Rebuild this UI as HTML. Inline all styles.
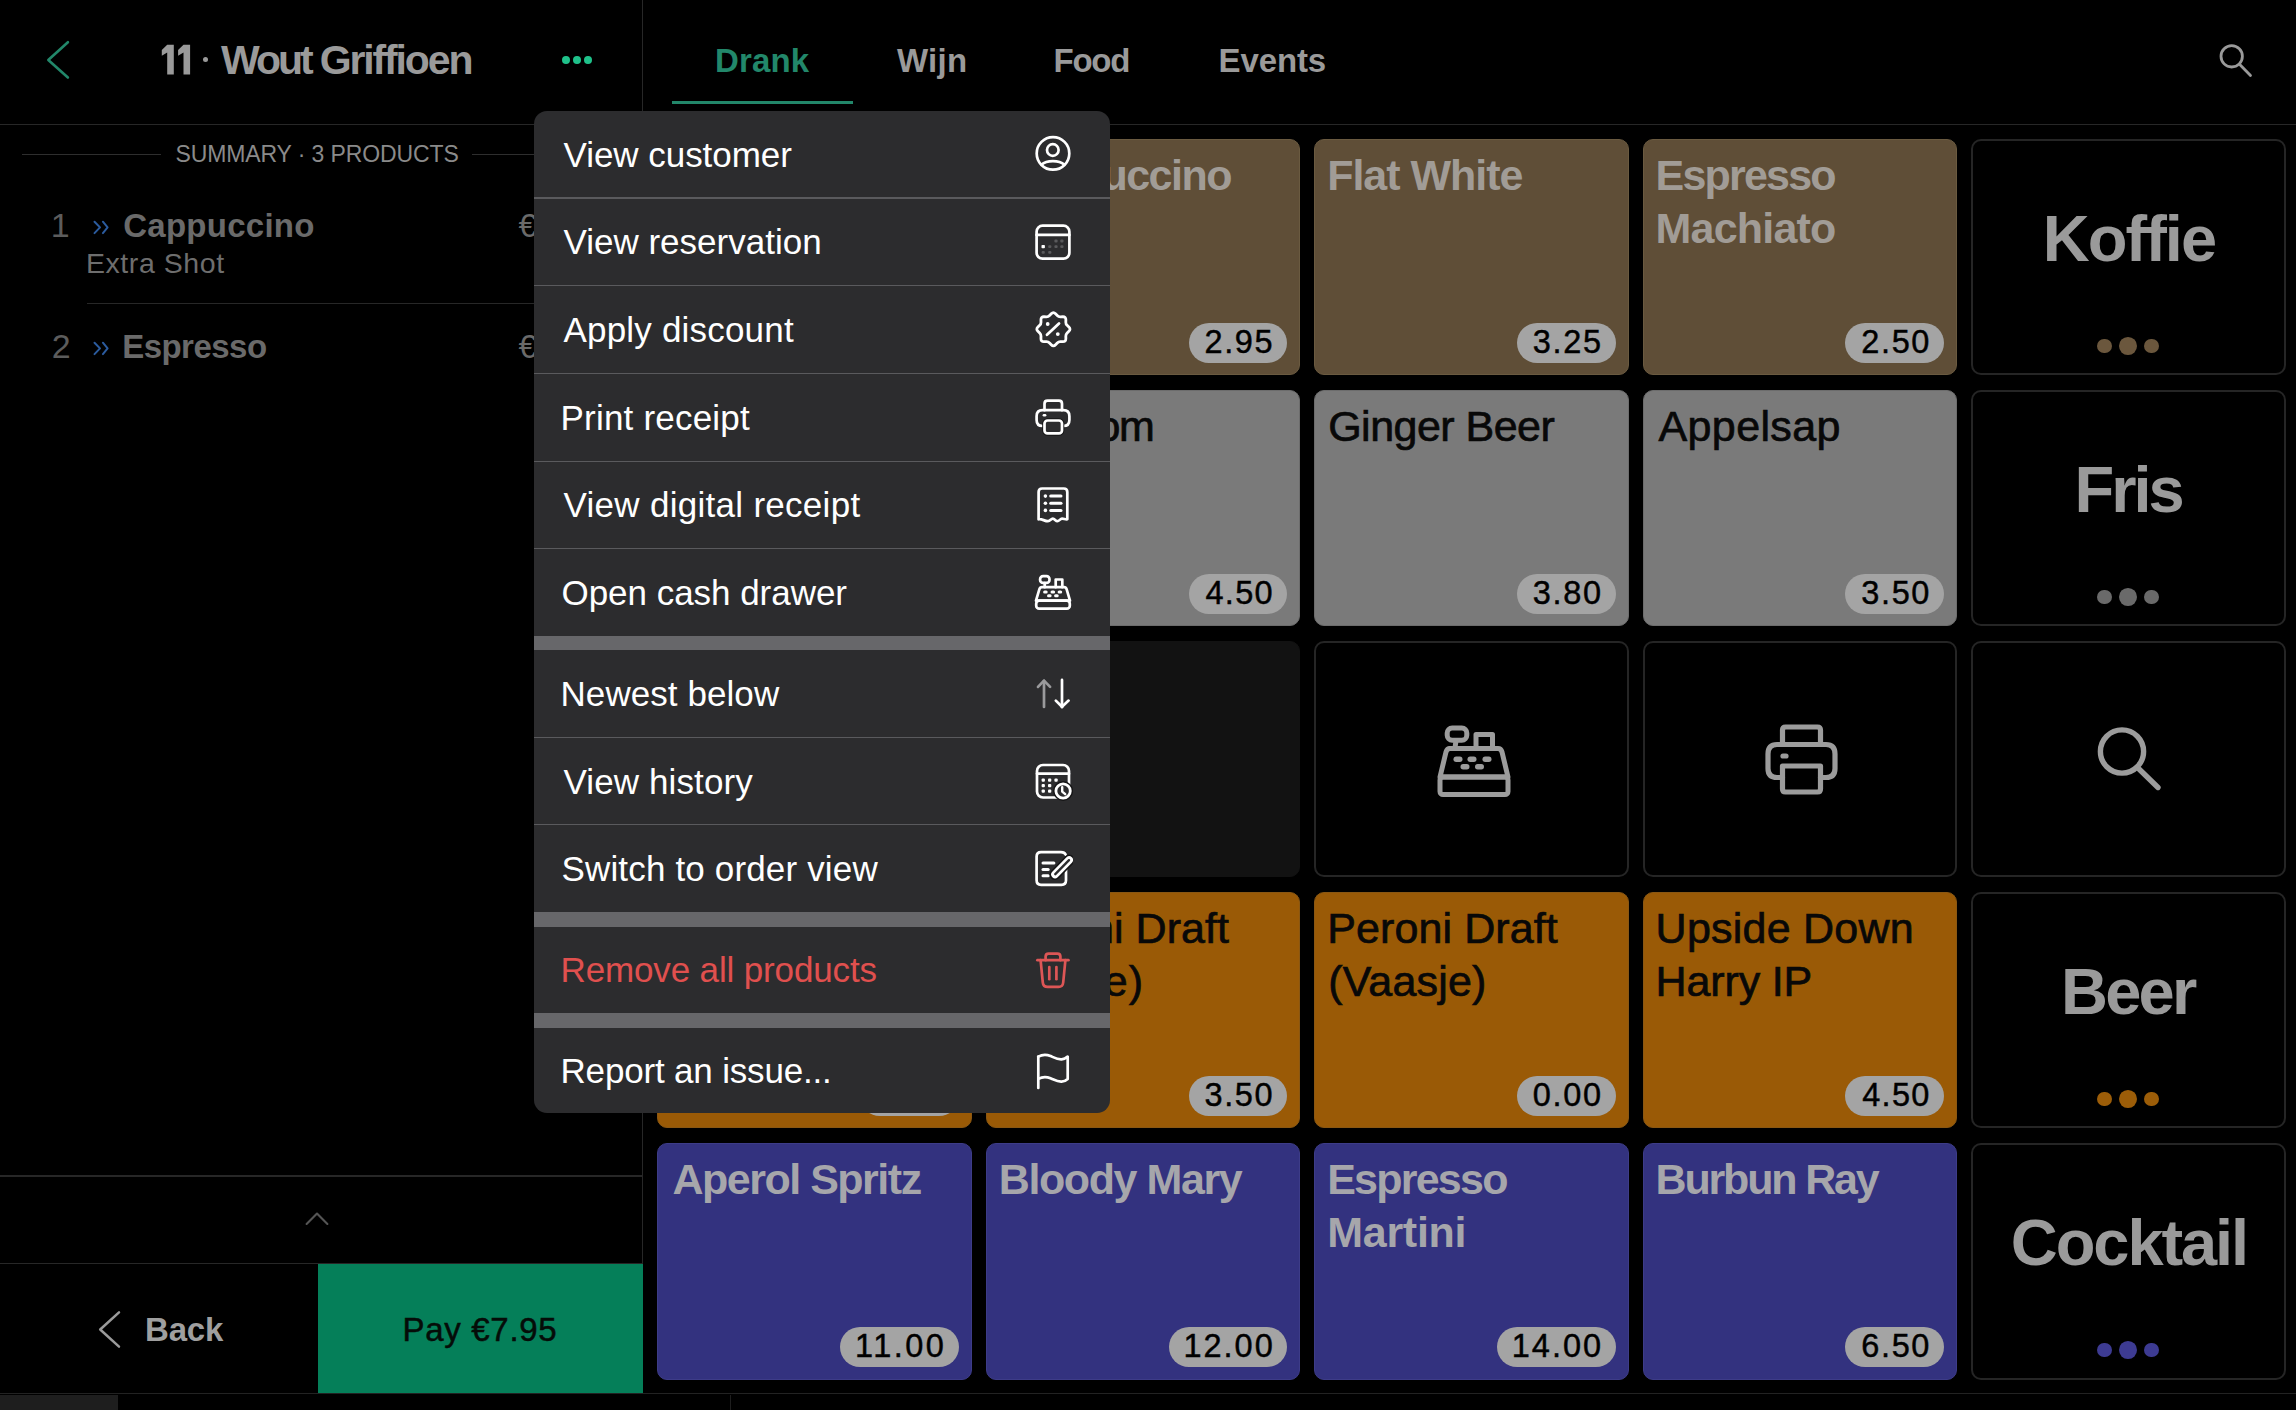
<!DOCTYPE html><html><head><meta charset="utf-8"><title>POS</title><style>
html,body{margin:0;padding:0;background:#000;width:2296px;height:1410px;overflow:hidden;position:relative;}
.t{position:absolute;font-family:"Liberation Sans", sans-serif;white-space:nowrap;line-height:1;}
.r{position:absolute;}
</style></head><body>
<svg class="r" style="left:40.00px;top:35.00px" width="40" height="50" viewBox="0 0 40 50" fill="none"><polyline points="27.9,7.2 8.3,25 27.9,42.5" stroke="#22876a" stroke-width="2.6" stroke-linecap="round" stroke-linejoin="round"/></svg>
<svg class="r" style="left:150.00px;top:40.00px" width="50" height="40" viewBox="0 0 50 40" fill="none"><g fill="#9a9a9a"><path d="M17.2 4.8 H23.8 V34.4 H17.2 V12.6 L11.8 15.8 V10 Z"/><path d="M33.5 4.8 H40.1 V34.4 H33.5 V12.6 L28.1 15.8 V10 Z"/></g></svg>
<div class="r" style="left:202.90px;top:57.20px;width:5.20px;height:5.20px;border-radius:50%;background:#9a9a9a"></div>
<div class="t" style="left:221.00px;top:39.69px;font-size:41px;color:#9a9a9a;font-weight:700;letter-spacing:-3.033px;">Wout</div>
<div class="t" style="left:319.80px;top:39.69px;font-size:41px;color:#9a9a9a;font-weight:700;letter-spacing:-2.150px;">Griffioen</div>
<div class="r" style="left:562.20px;top:56.10px;width:7.80px;height:7.80px;border-radius:50%;background:#1fc18a"></div>
<div class="r" style="left:573.00px;top:56.10px;width:7.80px;height:7.80px;border-radius:50%;background:#1fc18a"></div>
<div class="r" style="left:584.00px;top:56.10px;width:7.80px;height:7.80px;border-radius:50%;background:#1fc18a"></div>
<div class="t" style="left:715.00px;top:44.27px;font-size:33px;color:#22876a;font-weight:700;letter-spacing:0.150px;">Drank</div>
<div class="t" style="left:897.00px;top:44.27px;font-size:33px;color:#9a9a9a;font-weight:700;letter-spacing:0.267px;">Wijn</div>
<div class="t" style="left:1053.50px;top:44.27px;font-size:33px;color:#9a9a9a;font-weight:700;letter-spacing:-1.233px;">Food</div>
<div class="t" style="left:1218.60px;top:44.27px;font-size:33px;color:#9a9a9a;font-weight:700;letter-spacing:-0.120px;">Events</div>
<div class="r" style="left:672.00px;top:101.00px;width:181.00px;height:3.00px;background:#22876a;"></div>
<svg class="r" style="left:2210.00px;top:35.00px" width="50" height="50" viewBox="0 0 50 50" fill="none"><circle cx="21.7" cy="21.3" r="10.7" stroke="#9a9a9a" stroke-width="2.8"/><line x1="29.5" y1="29.2" x2="40.5" y2="40.5" stroke="#9a9a9a" stroke-width="2.8" stroke-linecap="round"/></svg>
<div class="r" style="left:0.00px;top:123.50px;width:2296.00px;height:1.50px;background:#272727;"></div>
<div class="r" style="left:641.80px;top:0.00px;width:1.50px;height:1393.50px;background:#272727;"></div>
<div class="r" style="left:22.00px;top:154.00px;width:139.00px;height:1.30px;background:#2e2e2e;"></div>
<div class="r" style="left:472.00px;top:154.00px;width:170.00px;height:1.30px;background:#2e2e2e;"></div>
<div class="t" style="left:175.40px;top:142.93px;font-size:23px;color:#8a8a8a;font-weight:400;letter-spacing:-0.100px;">SUMMARY · 3 PRODUCTS</div>
<div class="t" style="left:50.70px;top:207.72px;font-size:34px;color:#5c5c5c;font-weight:400;letter-spacing:0.000px;">1</div>
<svg class="r" style="left:90.00px;top:216.50px" width="22" height="18" viewBox="0 0 22 18" fill="none"><g stroke="#2b5b9e" stroke-width="2" stroke-linecap="round" stroke-linejoin="round" fill="none"><polyline points="4.5,4.7 10,10.4 4.5,16.1"/><polyline points="12.9,4.7 17.6,10.4 12.9,16.1"/></g></svg>
<div class="t" style="left:123.20px;top:208.57px;font-size:33px;color:#6a6a6a;font-weight:700;letter-spacing:0.267px;">Cappuccino</div>
<div class="t" style="left:518.60px;top:208.57px;font-size:33px;color:#6a6a6a;font-weight:400;letter-spacing:0.000px;">€</div>
<div class="t" style="left:86.00px;top:248.87px;font-size:28.5px;color:#6e6e6e;font-weight:400;letter-spacing:0.556px;">Extra Shot</div>
<div class="r" style="left:87.00px;top:302.50px;width:555.00px;height:1.50px;background:#272727;"></div>
<div class="t" style="left:51.70px;top:328.82px;font-size:34px;color:#5c5c5c;font-weight:400;letter-spacing:0.000px;">2</div>
<svg class="r" style="left:90.00px;top:337.60px" width="22" height="18" viewBox="0 0 22 18" fill="none"><g stroke="#2b5b9e" stroke-width="2" stroke-linecap="round" stroke-linejoin="round" fill="none"><polyline points="4.5,4.7 10,10.4 4.5,16.1"/><polyline points="12.9,4.7 17.6,10.4 12.9,16.1"/></g></svg>
<div class="t" style="left:122.20px;top:329.67px;font-size:33px;color:#6a6a6a;font-weight:700;letter-spacing:-0.529px;">Espresso</div>
<div class="t" style="left:518.60px;top:329.67px;font-size:33px;color:#6a6a6a;font-weight:400;letter-spacing:0.000px;">€</div>
<div class="r" style="left:0.00px;top:1175.30px;width:642.00px;height:1.50px;background:#272727;"></div>
<svg class="r" style="left:300.00px;top:1205.00px" width="35" height="25" viewBox="0 0 35 25" fill="none"><polyline points="6.6,19 17,8.6 27.4,19" stroke="#555" stroke-width="2.1" stroke-linecap="round" stroke-linejoin="round"/></svg>
<div class="r" style="left:0.00px;top:1262.80px;width:642.00px;height:1.50px;background:#272727;"></div>
<svg class="r" style="left:90.00px;top:1300.00px" width="40" height="60" viewBox="0 0 40 60" fill="none"><polyline points="29,12.3 10.2,29.5 29,46.6" stroke="#9a9a9a" stroke-width="2.5" stroke-linecap="round" stroke-linejoin="round"/></svg>
<div class="t" style="left:145.00px;top:1313.07px;font-size:33px;color:#9f9f9f;font-weight:700;letter-spacing:-0.167px;">Back</div>
<div class="r" style="left:317.50px;top:1264.30px;width:325.00px;height:129.20px;background:#057f59;"></div>
<div class="t" style="left:402.60px;top:1313.07px;font-size:33px;color:#050c08;font-weight:400;letter-spacing:0.675px;-webkit-text-stroke:0.5px #050c08;">Pay €7.95</div>
<div class="r" style="left:0.00px;top:1393.20px;width:2296.00px;height:1.20px;background:#222222;"></div>
<div class="r" style="left:0.00px;top:1395.00px;width:118.00px;height:15.00px;background:#1e1e1e;"></div>
<div class="r" style="left:729.50px;top:1394.50px;width:1.50px;height:15.50px;background:#1e1e1e;"></div>
<div class="r" style="left:657.40px;top:139.00px;width:314.50px;height:236.35px;background:#5f4e37;border-radius:10px;box-sizing:border-box;border:1.6px solid #6a5a40"></div>
<div class="t" style="left:670.40px;top:154.00px;font-size:43px;color:#a19c96;font-weight:700;letter-spacing:0.000px;">Espresso</div>
<div class="r" style="left:860.20px;top:322.75px;width:98.80px;height:40px;border-radius:20px;background:#a4a4a4"></div>
<div class="t" style="left:876.00px;top:326.14px;font-size:32.5px;color:#000;font-weight:400;letter-spacing:1.667px;-webkit-text-stroke:0.45px #000;">2.50</div>
<div class="r" style="left:985.80px;top:139.00px;width:314.50px;height:236.35px;background:#5f4e37;border-radius:10px;box-sizing:border-box;border:1.6px solid #6a5a40"></div>
<div class="t" style="left:999.80px;top:154.00px;font-size:43px;color:#a19c96;font-weight:700;letter-spacing:-1.478px;">Cappuccino</div>
<div class="r" style="left:1188.60px;top:322.75px;width:98.80px;height:40px;border-radius:20px;background:#a4a4a4"></div>
<div class="t" style="left:1204.40px;top:326.14px;font-size:32.5px;color:#000;font-weight:400;letter-spacing:1.667px;-webkit-text-stroke:0.45px #000;">2.95</div>
<div class="r" style="left:1314.20px;top:139.00px;width:314.50px;height:236.35px;background:#5f4e37;border-radius:10px;box-sizing:border-box;border:1.6px solid #6a5a40"></div>
<div class="t" style="left:1327.20px;top:154.00px;font-size:43px;color:#a19c96;font-weight:700;letter-spacing:-1.022px;">Flat White</div>
<div class="r" style="left:1517.00px;top:322.75px;width:98.80px;height:40px;border-radius:20px;background:#a4a4a4"></div>
<div class="t" style="left:1532.80px;top:326.14px;font-size:32.5px;color:#000;font-weight:400;letter-spacing:1.667px;-webkit-text-stroke:0.45px #000;">3.25</div>
<div class="r" style="left:1642.60px;top:139.00px;width:314.50px;height:236.35px;background:#5f4e37;border-radius:10px;box-sizing:border-box;border:1.6px solid #6a5a40"></div>
<div class="t" style="left:1655.60px;top:154.00px;font-size:43px;color:#a19c96;font-weight:700;letter-spacing:-1.800px;">Espresso</div>
<div class="t" style="left:1655.60px;top:207.00px;font-size:43px;color:#a19c96;font-weight:700;letter-spacing:-0.800px;">Machiato</div>
<div class="r" style="left:1845.40px;top:322.75px;width:98.80px;height:40px;border-radius:20px;background:#a4a4a4"></div>
<div class="t" style="left:1861.20px;top:326.14px;font-size:32.5px;color:#000;font-weight:400;letter-spacing:1.667px;-webkit-text-stroke:0.45px #000;">2.50</div>
<div class="r" style="left:1971.00px;top:139.00px;width:314.50px;height:236.35px;background:#000;border-radius:10px;box-sizing:border-box;border:2.6px solid #252525"></div>
<div class="t" style="left:2042.70px;top:205.68px;font-size:65px;color:#9a9a9a;font-weight:700;letter-spacing:-1.940px;">Koffie</div>
<div class="r" style="left:2097.35px;top:338.80px;width:14.40px;height:14.40px;border-radius:50%;background:#6b573d"></div>
<div class="r" style="left:2119.05px;top:337.10px;width:17.80px;height:17.80px;border-radius:50%;background:#6b573d"></div>
<div class="r" style="left:2144.25px;top:338.80px;width:14.40px;height:14.40px;border-radius:50%;background:#6b573d"></div>
<div class="r" style="left:657.40px;top:390.05px;width:314.50px;height:236.35px;background:#7a7a7a;border-radius:10px;box-sizing:border-box;border:1.6px solid #6c6c6c"></div>
<div class="t" style="left:671.40px;top:405.05px;font-size:43px;color:#080808;font-weight:400;letter-spacing:0.000px;-webkit-text-stroke:0.7px #080808;">Cola</div>
<div class="r" style="left:860.20px;top:573.80px;width:98.80px;height:40px;border-radius:20px;background:#a4a4a4"></div>
<div class="t" style="left:876.00px;top:577.19px;font-size:32.5px;color:#000;font-weight:400;letter-spacing:1.667px;-webkit-text-stroke:0.45px #000;">3.50</div>
<div class="r" style="left:985.80px;top:390.05px;width:314.50px;height:236.35px;background:#7a7a7a;border-radius:10px;box-sizing:border-box;border:1.6px solid #6c6c6c"></div>
<div class="t" style="left:998.80px;top:405.05px;font-size:43px;color:#080808;font-weight:400;letter-spacing:-1.467px;-webkit-text-stroke:0.7px #080808;">Blossom</div>
<div class="r" style="left:1188.60px;top:573.80px;width:98.80px;height:40px;border-radius:20px;background:#a4a4a4"></div>
<div class="t" style="left:1205.40px;top:577.19px;font-size:32.5px;color:#000;font-weight:400;letter-spacing:1.333px;-webkit-text-stroke:0.45px #000;">4.50</div>
<div class="r" style="left:1314.20px;top:390.05px;width:314.50px;height:236.35px;background:#7a7a7a;border-radius:10px;box-sizing:border-box;border:1.6px solid #6c6c6c"></div>
<div class="t" style="left:1328.20px;top:405.05px;font-size:43px;color:#080808;font-weight:400;letter-spacing:-0.520px;-webkit-text-stroke:0.7px #080808;">Ginger Beer</div>
<div class="r" style="left:1517.00px;top:573.80px;width:98.80px;height:40px;border-radius:20px;background:#a4a4a4"></div>
<div class="t" style="left:1532.80px;top:577.19px;font-size:32.5px;color:#000;font-weight:400;letter-spacing:1.667px;-webkit-text-stroke:0.45px #000;">3.80</div>
<div class="r" style="left:1642.60px;top:390.05px;width:314.50px;height:236.35px;background:#7a7a7a;border-radius:10px;box-sizing:border-box;border:1.6px solid #6c6c6c"></div>
<div class="t" style="left:1658.60px;top:405.05px;font-size:43px;color:#080808;font-weight:400;letter-spacing:0.343px;-webkit-text-stroke:0.7px #080808;">Appelsap</div>
<div class="r" style="left:1845.40px;top:573.80px;width:98.80px;height:40px;border-radius:20px;background:#a4a4a4"></div>
<div class="t" style="left:1861.20px;top:577.19px;font-size:32.5px;color:#000;font-weight:400;letter-spacing:1.667px;-webkit-text-stroke:0.45px #000;">3.50</div>
<div class="r" style="left:1971.00px;top:390.05px;width:314.50px;height:236.35px;background:#000;border-radius:10px;box-sizing:border-box;border:2.6px solid #252525"></div>
<div class="t" style="left:2074.40px;top:456.73px;font-size:65px;color:#9a9a9a;font-weight:700;letter-spacing:-2.967px;">Fris</div>
<div class="r" style="left:2097.35px;top:589.85px;width:14.40px;height:14.40px;border-radius:50%;background:#6a6a6a"></div>
<div class="r" style="left:2119.05px;top:588.15px;width:17.80px;height:17.80px;border-radius:50%;background:#6a6a6a"></div>
<div class="r" style="left:2144.25px;top:589.85px;width:14.40px;height:14.40px;border-radius:50%;background:#6a6a6a"></div>
<div class="r" style="left:657.40px;top:641.10px;width:314.50px;height:236.35px;background:#121212;border-radius:10px;box-sizing:border-box;border:1.6px solid #121212"></div>
<div class="r" style="left:985.80px;top:641.10px;width:314.50px;height:236.35px;background:#121212;border-radius:10px;box-sizing:border-box;border:1.6px solid #121212"></div>
<div class="r" style="left:1314.20px;top:641.10px;width:314.50px;height:236.35px;background:#000;border-radius:10px;box-sizing:border-box;border:2.6px solid #252525"></div>
<div class="r" style="left:1642.60px;top:641.10px;width:314.50px;height:236.35px;background:#000;border-radius:10px;box-sizing:border-box;border:2.6px solid #252525"></div>
<div class="r" style="left:1971.00px;top:641.10px;width:314.50px;height:236.35px;background:#000;border-radius:10px;box-sizing:border-box;border:2.6px solid #252525"></div>
<div class="r" style="left:657.40px;top:892.15px;width:314.50px;height:236.35px;background:#9a5a06;border-radius:10px;box-sizing:border-box;border:1.6px solid #8a5712"></div>
<div class="t" style="left:670.40px;top:907.15px;font-size:43px;color:#080808;font-weight:400;letter-spacing:0.000px;-webkit-text-stroke:0.7px #080808;">Heineken</div>
<div class="r" style="left:860.20px;top:1075.90px;width:98.80px;height:40px;border-radius:20px;background:#a4a4a4"></div>
<div class="t" style="left:876.00px;top:1079.29px;font-size:32.5px;color:#000;font-weight:400;letter-spacing:1.667px;-webkit-text-stroke:0.45px #000;">3.50</div>
<div class="r" style="left:985.80px;top:892.15px;width:314.50px;height:236.35px;background:#9a5a06;border-radius:10px;box-sizing:border-box;border:1.6px solid #8a5712"></div>
<div class="t" style="left:998.80px;top:907.15px;font-size:43px;color:#080808;font-weight:400;letter-spacing:0.073px;-webkit-text-stroke:0.7px #080808;">Peroni Draft</div>
<div class="t" style="left:999.80px;top:960.15px;font-size:43px;color:#080808;font-weight:400;letter-spacing:1.000px;-webkit-text-stroke:0.7px #080808;">(Pintje)</div>
<div class="r" style="left:1188.60px;top:1075.90px;width:98.80px;height:40px;border-radius:20px;background:#a4a4a4"></div>
<div class="t" style="left:1204.40px;top:1079.29px;font-size:32.5px;color:#000;font-weight:400;letter-spacing:1.667px;-webkit-text-stroke:0.45px #000;">3.50</div>
<div class="r" style="left:1314.20px;top:892.15px;width:314.50px;height:236.35px;background:#9a5a06;border-radius:10px;box-sizing:border-box;border:1.6px solid #8a5712"></div>
<div class="t" style="left:1327.20px;top:907.15px;font-size:43px;color:#080808;font-weight:400;letter-spacing:0.100px;-webkit-text-stroke:0.7px #080808;">Peroni Draft</div>
<div class="t" style="left:1328.20px;top:960.15px;font-size:43px;color:#080808;font-weight:400;letter-spacing:0.186px;-webkit-text-stroke:0.7px #080808;">(Vaasje)</div>
<div class="r" style="left:1517.00px;top:1075.90px;width:98.80px;height:40px;border-radius:20px;background:#a4a4a4"></div>
<div class="t" style="left:1532.80px;top:1079.29px;font-size:32.5px;color:#000;font-weight:400;letter-spacing:1.667px;-webkit-text-stroke:0.45px #000;">0.00</div>
<div class="r" style="left:1642.60px;top:892.15px;width:314.50px;height:236.35px;background:#9a5a06;border-radius:10px;box-sizing:border-box;border:1.6px solid #8a5712"></div>
<div class="t" style="left:1655.60px;top:907.15px;font-size:43px;color:#080808;font-weight:400;letter-spacing:0.240px;-webkit-text-stroke:0.7px #080808;">Upside Down</div>
<div class="t" style="left:1655.60px;top:960.15px;font-size:43px;color:#080808;font-weight:400;letter-spacing:-0.143px;-webkit-text-stroke:0.7px #080808;">Harry IP</div>
<div class="r" style="left:1845.40px;top:1075.90px;width:98.80px;height:40px;border-radius:20px;background:#a4a4a4"></div>
<div class="t" style="left:1862.20px;top:1079.29px;font-size:32.5px;color:#000;font-weight:400;letter-spacing:1.333px;-webkit-text-stroke:0.45px #000;">4.50</div>
<div class="r" style="left:1971.00px;top:892.15px;width:314.50px;height:236.35px;background:#000;border-radius:10px;box-sizing:border-box;border:2.6px solid #252525"></div>
<div class="t" style="left:2061.00px;top:958.83px;font-size:65px;color:#9a9a9a;font-weight:700;letter-spacing:-2.767px;">Beer</div>
<div class="r" style="left:2097.35px;top:1091.95px;width:14.40px;height:14.40px;border-radius:50%;background:#9c5d08"></div>
<div class="r" style="left:2119.05px;top:1090.25px;width:17.80px;height:17.80px;border-radius:50%;background:#9c5d08"></div>
<div class="r" style="left:2144.25px;top:1091.95px;width:14.40px;height:14.40px;border-radius:50%;background:#9c5d08"></div>
<div class="r" style="left:657.40px;top:1143.20px;width:314.50px;height:236.35px;background:#33327f;border-radius:10px;box-sizing:border-box;border:1.6px solid #3d3c88"></div>
<div class="t" style="left:672.40px;top:1158.20px;font-size:43px;color:#a6a6ab;font-weight:700;letter-spacing:-1.483px;">Aperol Spritz</div>
<div class="r" style="left:840.20px;top:1326.95px;width:118.80px;height:40px;border-radius:20px;background:#a4a4a4"></div>
<div class="t" style="left:855.00px;top:1330.34px;font-size:32.5px;color:#000;font-weight:400;letter-spacing:2.500px;-webkit-text-stroke:0.45px #000;">11.00</div>
<div class="r" style="left:985.80px;top:1143.20px;width:314.50px;height:236.35px;background:#33327f;border-radius:10px;box-sizing:border-box;border:1.6px solid #3d3c88"></div>
<div class="t" style="left:998.80px;top:1158.20px;font-size:43px;color:#a6a6ab;font-weight:700;letter-spacing:-1.420px;">Bloody Mary</div>
<div class="r" style="left:1168.60px;top:1326.95px;width:118.80px;height:40px;border-radius:20px;background:#a4a4a4"></div>
<div class="t" style="left:1183.40px;top:1330.34px;font-size:32.5px;color:#000;font-weight:400;letter-spacing:2.000px;-webkit-text-stroke:0.45px #000;">12.00</div>
<div class="r" style="left:1314.20px;top:1143.20px;width:314.50px;height:236.35px;background:#33327f;border-radius:10px;box-sizing:border-box;border:1.6px solid #3d3c88"></div>
<div class="t" style="left:1327.20px;top:1158.20px;font-size:43px;color:#a6a6ab;font-weight:700;letter-spacing:-1.771px;">Espresso</div>
<div class="t" style="left:1327.20px;top:1211.20px;font-size:43px;color:#a6a6ab;font-weight:700;letter-spacing:-0.267px;">Martini</div>
<div class="r" style="left:1497.00px;top:1326.95px;width:118.80px;height:40px;border-radius:20px;background:#a4a4a4"></div>
<div class="t" style="left:1511.80px;top:1330.34px;font-size:32.5px;color:#000;font-weight:400;letter-spacing:2.000px;-webkit-text-stroke:0.45px #000;">14.00</div>
<div class="r" style="left:1642.60px;top:1143.20px;width:314.50px;height:236.35px;background:#33327f;border-radius:10px;box-sizing:border-box;border:1.6px solid #3d3c88"></div>
<div class="t" style="left:1655.60px;top:1158.20px;font-size:43px;color:#a6a6ab;font-weight:700;letter-spacing:-2.178px;">Burbun Ray</div>
<div class="r" style="left:1845.40px;top:1326.95px;width:98.80px;height:40px;border-radius:20px;background:#a4a4a4"></div>
<div class="t" style="left:1861.20px;top:1330.34px;font-size:32.5px;color:#000;font-weight:400;letter-spacing:1.667px;-webkit-text-stroke:0.45px #000;">6.50</div>
<div class="r" style="left:1971.00px;top:1143.20px;width:314.50px;height:236.35px;background:#000;border-radius:10px;box-sizing:border-box;border:2.6px solid #252525"></div>
<div class="t" style="left:2010.80px;top:1209.88px;font-size:65px;color:#9a9a9a;font-weight:700;letter-spacing:-2.071px;">Cocktail</div>
<div class="r" style="left:2097.35px;top:1343.00px;width:14.40px;height:14.40px;border-radius:50%;background:#3d3b92"></div>
<div class="r" style="left:2119.05px;top:1341.30px;width:17.80px;height:17.80px;border-radius:50%;background:#3d3b92"></div>
<div class="r" style="left:2144.25px;top:1343.00px;width:14.40px;height:14.40px;border-radius:50%;background:#3d3b92"></div>
<svg class="r" style="left:1420.00px;top:700.00px" width="110" height="120" viewBox="0 0 110 120" fill="none"><g stroke="#9c9c9c" stroke-width="5" stroke-linejoin="round" stroke-linecap="round">
<rect x="27.2" y="28" width="19.6" height="12.2" rx="5"/>
<line x1="36" y1="40.5" x2="35" y2="48"/>
<rect x="56" y="34.5" width="16.5" height="14"/>
<path d="M29 48.5 H78 Q81 48.5 82 52 L88 77 H20 L26 52 Q27 48.5 30 48.5 Z"/>
<rect x="20" y="77" width="68" height="17.5" rx="3"/>
</g>
<g fill="#9c9c9c"><rect x="33.5" y="56.5" width="9" height="5.5" rx="2.7"/><rect x="47.5" y="56.5" width="9" height="5.5" rx="2.7"/><rect x="62.5" y="56.5" width="9" height="5.5" rx="2.7"/><rect x="40.5" y="64" width="9" height="5.5" rx="2.7"/><rect x="55" y="64" width="9" height="5.5" rx="2.7"/></g></svg>
<svg class="r" style="left:1745.00px;top:700.00px" width="110" height="120" viewBox="0 0 110 120" fill="none"><g stroke="#9c9c9c" stroke-width="5.2" stroke-linejoin="round" stroke-linecap="round">
<path d="M37.5 44 V30 Q37.5 27 40.5 27 H72.5 Q75.5 27 75.5 30 V44"/>
<path d="M37.5 77.5 H32 Q23 77.5 23 68.5 V54 Q23 44.5 32 44.5 H81 Q90 44.5 90 54 V68.5 Q90 77.5 81 77.5 H75.5"/>
<path d="M37.5 66 H75.5 V89 Q75.5 92 72.5 92 H40.5 Q37.5 92 37.5 89 Z"/>
<line x1="38" y1="56" x2="41" y2="56"/>
</g></svg>
<svg class="r" style="left:2075.00px;top:700.00px" width="110" height="120" viewBox="0 0 110 120" fill="none"><circle cx="47" cy="51.5" r="21.6" stroke="#9c9c9c" stroke-width="5.4"/><line x1="64" y1="69" x2="83" y2="87.5" stroke="#9c9c9c" stroke-width="5.4" stroke-linecap="round"/></svg>
<div class="r" style="left:533.8px;top:110.8px;width:576.40px;height:1002.10px;background:#2c2c2e;border-radius:13px;overflow:hidden">
<div class="r" style="left:0;top:86.60px;width:100%;height:1.20px;background:#5a5a5d"></div>
<div class="r" style="left:0;top:174.00px;width:100%;height:1.20px;background:#5a5a5d"></div>
<div class="r" style="left:0;top:261.80px;width:100%;height:1.20px;background:#5a5a5d"></div>
<div class="r" style="left:0;top:349.80px;width:100%;height:1.20px;background:#5a5a5d"></div>
<div class="r" style="left:0;top:437.20px;width:100%;height:1.20px;background:#5a5a5d"></div>
<div class="r" style="left:0;top:626.20px;width:100%;height:1.20px;background:#5a5a5d"></div>
<div class="r" style="left:0;top:713.50px;width:100%;height:1.20px;background:#5a5a5d"></div>
<div class="r" style="left:0;top:525.40px;width:100%;height:13.60px;background:#67676a"></div>
<div class="r" style="left:0;top:801.10px;width:100%;height:14.70px;background:#67676a"></div>
<div class="r" style="left:0;top:902.30px;width:100%;height:14.60px;background:#67676a"></div>
</div>
<div class="t" style="left:563.50px;top:136.97px;font-size:35px;color:#fff;font-weight:400;letter-spacing:-0.042px;">View customer</div>
<div class="t" style="left:563.50px;top:224.17px;font-size:35px;color:#fff;font-weight:400;letter-spacing:0.000px;">View reservation</div>
<div class="t" style="left:563.50px;top:311.77px;font-size:35px;color:#fff;font-weight:400;letter-spacing:0.192px;">Apply discount</div>
<div class="t" style="left:560.50px;top:399.67px;font-size:35px;color:#fff;font-weight:400;letter-spacing:0.208px;">Print receipt</div>
<div class="t" style="left:563.50px;top:487.37px;font-size:35px;color:#fff;font-weight:400;letter-spacing:0.289px;">View digital receipt</div>
<div class="t" style="left:561.50px;top:574.97px;font-size:35px;color:#fff;font-weight:400;letter-spacing:-0.033px;">Open cash drawer</div>
<div class="t" style="left:560.50px;top:676.37px;font-size:35px;color:#fff;font-weight:400;letter-spacing:0.073px;">Newest below</div>
<div class="t" style="left:563.50px;top:763.67px;font-size:35px;color:#fff;font-weight:400;letter-spacing:0.109px;">View history</div>
<div class="t" style="left:561.50px;top:850.97px;font-size:35px;color:#fff;font-weight:400;letter-spacing:0.158px;">Switch to order view</div>
<div class="t" style="left:560.50px;top:952.17px;font-size:35px;color:#e0504e;font-weight:400;letter-spacing:-0.139px;">Remove all products</div>
<div class="t" style="left:560.50px;top:1052.87px;font-size:35px;color:#fff;font-weight:400;letter-spacing:-0.176px;">Report an issue...</div>
<svg class="r" style="left:1033.00px;top:134.30px" width="40" height="40" viewBox="0 0 40 40" fill="none"><g stroke="#fff" stroke-width="2.7" stroke-linecap="round" stroke-linejoin="round" fill="none"><circle cx="20" cy="19.4" r="16.3"/><circle cx="19.8" cy="16" r="5.8"/><path d="M8.6 30.6 A13 7 0 0 1 31.2 30.6"/></g></svg>
<svg class="r" style="left:1033.00px;top:221.50px" width="40" height="40" viewBox="0 0 40 40" fill="none"><g stroke="#fff" stroke-width="2.7" stroke-linecap="round" stroke-linejoin="round" fill="none"><rect x="3.6" y="3.7" width="32.8" height="33" rx="6"/><line x1="3.6" y1="12.9" x2="36.4" y2="12.9"/></g><rect x="8.5" y="22.9" width="3.4" height="3.4" rx="0.8" fill="#fff"/><g fill="#5a5a5c"><rect x="15.2" y="23.2" width="3.2" height="2.8" rx="1"/><rect x="21.4" y="17.6" width="3.2" height="2.8" rx="1"/><rect x="21.4" y="23.2" width="3.2" height="2.8" rx="1"/><rect x="27.3" y="17.6" width="3.2" height="2.8" rx="1"/><rect x="27.3" y="23.2" width="3.2" height="2.8" rx="1"/><rect x="8.6" y="28.9" width="3.2" height="2.8" rx="1"/><rect x="15.2" y="28.9" width="3.2" height="2.8" rx="1"/></g></svg>
<svg class="r" style="left:1028px;top:304px" width="50" height="50" viewBox="0 0 50 50" fill="none"><path d="M23.25 9.73 Q25.40 7.50 27.55 9.73 L29.25 11.49 Q30.53 12.82 32.37 12.79 L34.81 12.74 Q37.92 12.68 37.86 15.79 L37.81 18.23 Q37.78 20.07 39.11 21.35 L40.87 23.05 Q43.10 25.20 40.87 27.35 L39.11 29.05 Q37.78 30.33 37.81 32.17 L37.86 34.61 Q37.92 37.72 34.81 37.66 L32.37 37.61 Q30.53 37.58 29.25 38.91 L27.55 40.67 Q25.40 42.90 23.25 40.67 L21.55 38.91 Q20.27 37.58 18.43 37.61 L15.99 37.66 Q12.88 37.72 12.94 34.61 L12.99 32.17 Q13.02 30.33 11.69 29.05 L9.93 27.35 Q7.70 25.20 9.93 23.05 L11.69 21.35 Q13.02 20.07 12.99 18.23 L12.94 15.79 Q12.88 12.68 15.99 12.74 L18.43 12.79 Q20.27 12.82 21.55 11.49 Z" stroke="#fff" stroke-width="2.8" stroke-linejoin="round"/><line x1="19" y1="30.8" x2="31" y2="19.4" stroke="#fff" stroke-width="2.8" stroke-linecap="round"/><circle cx="19.7" cy="20" r="1.9" fill="#fff"/><circle cx="29.8" cy="30.1" r="1.9" fill="#fff"/></svg>
<svg class="r" style="left:1033.00px;top:397.00px" width="40" height="40" viewBox="0 0 40 40" fill="none"><g stroke="#fff" stroke-width="2.7" stroke-linecap="round" stroke-linejoin="round" fill="none"><path d="M11.5 13.2 V6.7 Q11.5 3.7 14.5 3.7 H26 Q29 3.7 29 6.7 V13.2"/><path d="M11.5 29 H9.6 Q3.6 29 3.6 23 V19.2 Q3.6 13.2 9.6 13.2 H30.4 Q36.4 13.2 36.4 19.2 V23 Q36.4 29 30.4 29 H29"/></g><rect x="11.5" y="23.5" width="17.5" height="12.9" rx="3" stroke="#151516" stroke-width="4.6" fill="#2c2c2e"/><rect x="11.5" y="23.5" width="17.5" height="12.9" rx="3" stroke="#fff" stroke-width="2.7" fill="#2c2c2e"/><rect x="9.6" y="16.9" width="3.8" height="2.6" rx="1.3" fill="#fff"/></svg>
<svg class="r" style="left:1033.00px;top:484.70px" width="40" height="40" viewBox="0 0 40 40" fill="none"><g stroke="#fff" stroke-width="2.7" stroke-linecap="round" stroke-linejoin="round" fill="none"><path d="M5.6 34.3 V7 Q5.6 3.5 9.1 3.5 H30.8 Q34.3 3.5 34.3 7 V34.3 C32.5 34.8 31 33.6 29 33.6 C27.2 33.6 26.3 36.2 24.4 36.2 C22.6 36.2 21.7 33.6 19.8 33.6 C18 33.6 17.2 36.2 15 36.2 C11.5 36.2 8.6 33.5 5.6 34.3 Z"/><line x1="17.7" y1="11.1" x2="28" y2="11.1" stroke-width="3"/><line x1="17.7" y1="18.3" x2="28" y2="18.3" stroke-width="3"/><line x1="17.7" y1="25.4" x2="28" y2="25.4" stroke-width="3"/></g><g fill="#fff"><circle cx="12.4" cy="11.1" r="1.8"/><circle cx="12.4" cy="18.3" r="1.8"/><circle cx="12.4" cy="25.4" r="1.8"/></g></svg>
<svg class="r" style="left:1033.00px;top:572.30px" width="40" height="40" viewBox="0 0 40 40" fill="none"><g stroke="#fff" stroke-width="2.7" stroke-linecap="round" stroke-linejoin="round" fill="none"><rect x="7.1" y="4.2" width="9.4" height="6.7" rx="3"/><line x1="11.7" y1="11" x2="11.7" y2="15.2"/><path d="M22.7 15.2 V7.5 H29.3 V15.2"/><path d="M9.5 15.2 H31 Q33 15.2 33.6 17.2 L37 28.7 H3 L6.4 17.2 Q7 15.2 9 15.2 Z"/><rect x="3.2" y="28.7" width="33.6" height="8" rx="3"/></g><g fill="#fff"><rect x="10.1" y="18.4" width="4.6" height="3" rx="1.5"/><rect x="17.5" y="18.4" width="4.6" height="3" rx="1.5"/><rect x="24.6" y="18.4" width="4.6" height="3" rx="1.5"/><rect x="14" y="22.2" width="4.6" height="3" rx="1.5"/><rect x="21.1" y="22.2" width="4.6" height="3" rx="1.5"/></g></svg>
<svg class="r" style="left:1033.00px;top:673.70px" width="40" height="40" viewBox="0 0 40 40" fill="none"><g stroke-width="2.7" stroke-linecap="round" stroke-linejoin="round" fill="none"><g stroke="#9a9a9c"><line x1="11" y1="6.8" x2="11" y2="32.9"/><polyline points="5,12.9 11,6.6 17.1,12.9"/></g><g stroke="#fff"><line x1="29" y1="5.9" x2="29" y2="33.2"/><polyline points="22.8,26.6 29,32.8 35.6,26.6"/></g></g></svg>
<svg class="r" style="left:1033.00px;top:761.00px" width="40" height="40" viewBox="0 0 40 40" fill="none"><g stroke="#fff" stroke-width="2.7" stroke-linecap="round" stroke-linejoin="round" fill="none"><rect x="4" y="4" width="32" height="32.5" rx="6"/><line x1="4" y1="12.7" x2="36" y2="12.7"/></g><g fill="#fff"><rect x="8.6" y="17.4" width="3.3" height="3.3" rx="1"/><rect x="15" y="17.4" width="3.3" height="3.3" rx="1"/><rect x="21.4" y="17.4" width="3.3" height="3.3" rx="1"/><rect x="8.6" y="22.9" width="3.3" height="3.3" rx="1"/><rect x="15" y="22.9" width="3.3" height="3.3" rx="1"/><rect x="8.6" y="28.4" width="3.3" height="3.3" rx="1"/><rect x="15" y="28.4" width="3.3" height="3.3" rx="1"/></g><circle cx="30.1" cy="30" r="8.9" fill="#2c2c2e" stroke="#151516" stroke-width="2.2"/><circle cx="30.1" cy="30" r="7.2" stroke="#fff" stroke-width="2.8" fill="#2c2c2e"/><path d="M29.2 26.3 V30.6 L32.2 33.2" stroke="#fff" stroke-width="2.4" stroke-linecap="round" stroke-linejoin="round" fill="none"/></svg>
<svg class="r" style="left:1033.00px;top:848.30px" width="40" height="40" viewBox="0 0 40 40" fill="none"><g stroke="#fff" stroke-width="2.7" stroke-linecap="round" stroke-linejoin="round" fill="none"><path d="M33 21.5 V32.3 Q33 36.8 28.5 36.8 H8.1 Q3.6 36.8 3.6 32.3 V8.6 Q3.6 4.1 8.1 4.1 H28 Q31.5 4.1 32.6 6.5"/><line x1="10" y1="15" x2="20.9" y2="15" stroke-width="3"/><line x1="10" y1="21.4" x2="15.2" y2="21.4" stroke-width="3"/><line x1="10" y1="27.8" x2="15.2" y2="27.8" stroke-width="3"/></g><line x1="22" y1="26.5" x2="36.2" y2="12" stroke="#151516" stroke-width="11" stroke-linecap="round"/><line x1="22" y1="26.5" x2="36.2" y2="12" stroke="#fff" stroke-width="7.6" stroke-linecap="round"/><line x1="22.3" y1="26.2" x2="36" y2="12.2" stroke="#2c2c2e" stroke-width="2.4" stroke-linecap="round"/></svg>
<svg class="r" style="left:1033.00px;top:949.50px" width="40" height="40" viewBox="0 0 40 40" fill="none"><g stroke="#dd5656" stroke-width="2.7" stroke-linecap="round" stroke-linejoin="round" fill="none"><line x1="4.4" y1="10.2" x2="35.4" y2="10.2"/><path d="M12.6 10.2 V6.6 Q12.6 3.6 15.6 3.6 H24.4 Q27.4 3.6 27.4 6.6 V10.2"/><path d="M7.6 10.2 L9.8 32.5 Q10.2 36.9 14.6 36.9 H25.4 Q29.8 36.9 30.2 32.5 L32.4 10.2"/><line x1="16.3" y1="17" x2="16.3" y2="29.2"/><line x1="23.4" y1="17" x2="23.4" y2="29.2"/></g></svg>
<svg class="r" style="left:1033.00px;top:1050.20px" width="40" height="40" viewBox="0 0 40 40" fill="none"><g stroke="#fff" stroke-width="2.7" stroke-linecap="round" stroke-linejoin="round" fill="none"><path d="M5.3 38 V6.6"/><path d="M5.3 6.6 C9 4.5 13.5 4.3 17.5 6 C21.5 7.8 24.5 9.6 28.5 9.4 C31 9.3 33 8.2 34.7 6.6 V28.9 C33 30.5 31 31.6 28.5 31.7 C24.5 31.9 21.5 30 17.5 28.3 C13.5 26.6 9 26.8 5.3 28.9"/></g></svg>
</body></html>
